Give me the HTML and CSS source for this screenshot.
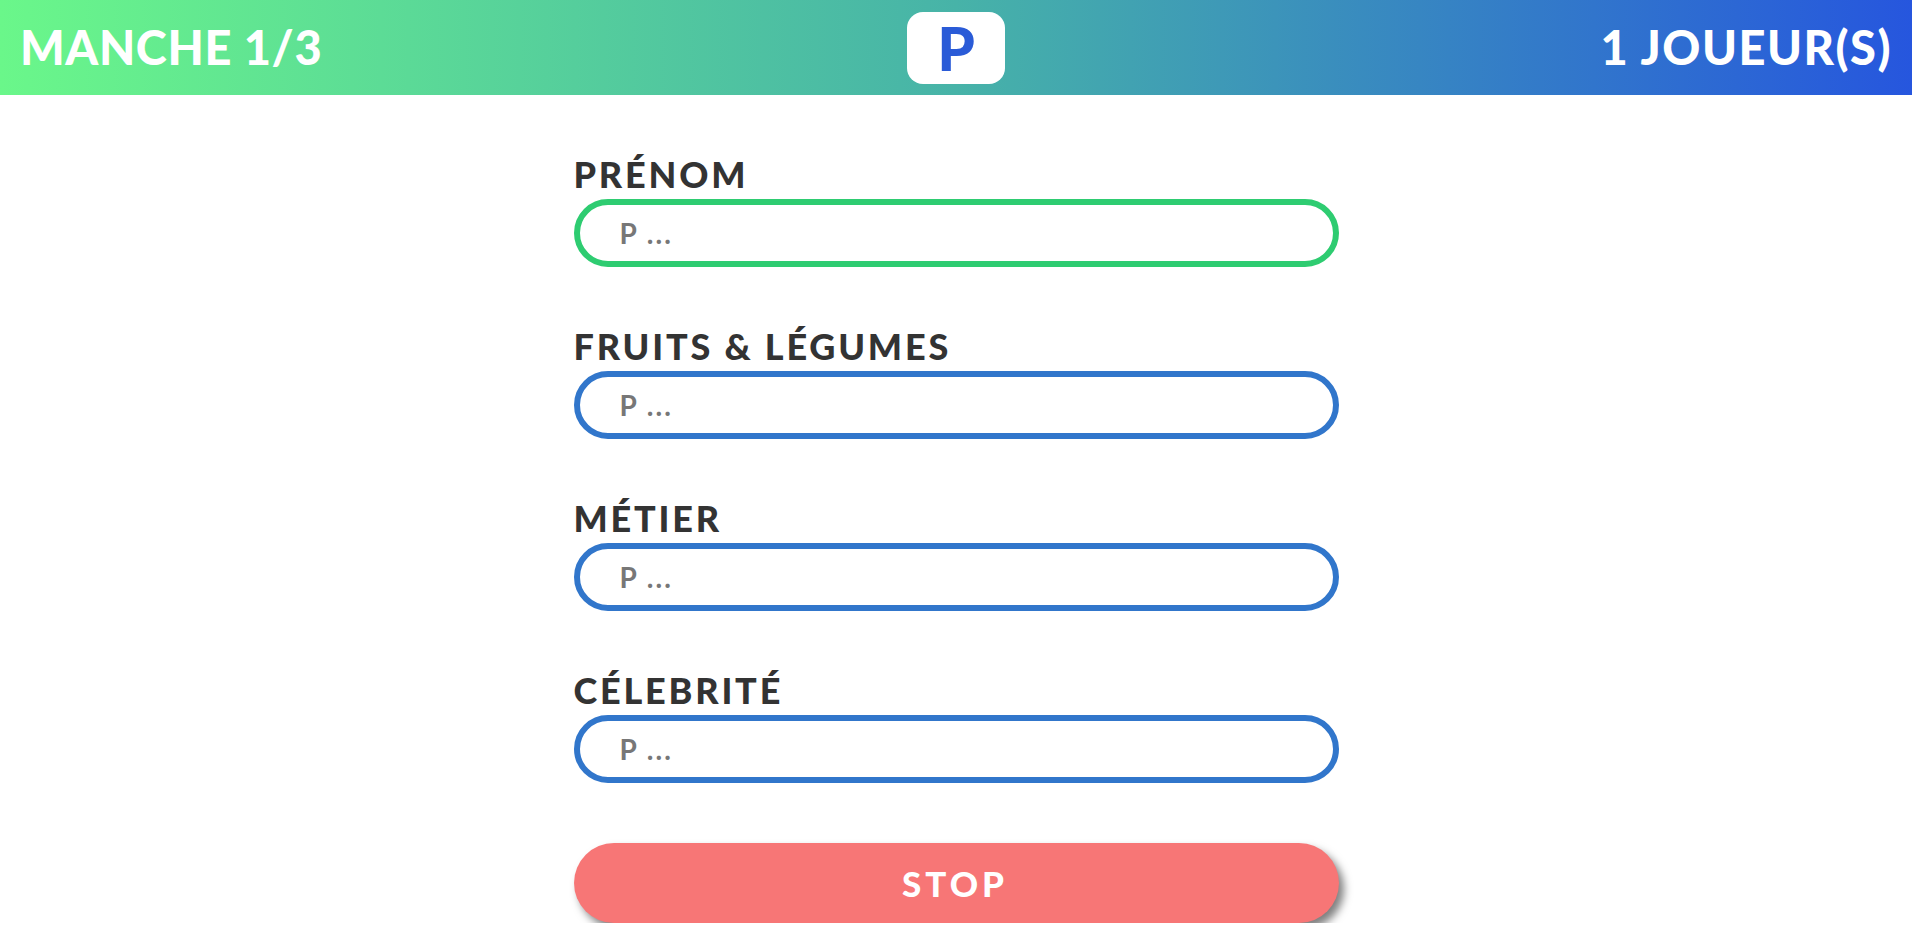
FILE: index.html
```html
<!DOCTYPE html>
<html lang="fr">
<head>
<meta charset="utf-8">
<title>Petit Bac</title>
<link rel="stylesheet" href="styles.css">
</head>
<body>
<header class="topbar">
  <div class="round">MANCHE 1/3</div>
  <div class="letter">P</div>
  <div class="players">1 JOUEUR(S)</div>
</header>
<main class="board">
  <form class="fields">
    <div class="field">
      <label class="field-label" for="f1">PRÉNOM</label>
      <input class="field-input active" id="f1" type="text" placeholder="P ..." autofocus>
    </div>
    <div class="field">
      <label class="field-label" for="f2">FRUITS &amp; LÉGUMES</label>
      <input class="field-input" id="f2" type="text" placeholder="P ...">
    </div>
    <div class="field">
      <label class="field-label" for="f3">MÉTIER</label>
      <input class="field-input" id="f3" type="text" placeholder="P ...">
    </div>
    <div class="field">
      <label class="field-label" for="f4">CÉLEBRITÉ</label>
      <input class="field-input" id="f4" type="text" placeholder="P ...">
    </div>
    <button class="stop" type="button">STOP</button>
  </form>
</main>
</body>
</html>
```
FILE: styles.css
```css
* { box-sizing: border-box; }
html, body { margin: 0; padding: 0; background: #fff; }
body { font-family: "Lato", "Open Sans", sans-serif; font-weight: 700; }

.topbar {
  height: 95px;
  display: grid;
  grid-template-columns: 1fr auto 1fr;
  align-items: center;
  padding: 0 20px 0 20px;
  background: linear-gradient(to right, #6af78a 0%, #47b3a8 50%, #2656de 100%);
  color: #fff;
}
.round, .players {
  font-size: 47px;
  line-height: 1;
  font-weight: 900;
  letter-spacing: 0.6px;
}
.players { justify-self: end; letter-spacing: 1.5px; }
.letter {
  width: 98px;
  height: 72px;
  background: #fff;
  border-radius: 16px;
  display: flex;
  align-items: center;
  justify-content: center;
  color: #2a5bd7;
  font-size: 60px;
  font-weight: 900;
  line-height: 1;
}

.board {
  width: 765px;
  margin: 0 auto;
  padding-top: 59px;
}
.fields {
  display: flex;
  flex-direction: column;
  gap: 59px;
}
.field {
  display: flex;
  flex-direction: column;
  gap: 5px;
}
.field-label {
  font-size: 36px;
  line-height: 40px;
  color: #333;
  font-weight: 900;
  letter-spacing: 2.8px;
}
.field-input {
  height: 68px;
  width: 100%;
  border: 6px solid #3176cb;
  border-radius: 34px;
  padding: 0 0 0 40px;
  font-family: inherit;
  font-weight: 700;
  font-size: 28px;
  letter-spacing: 2px;
  color: #333;
  outline: none;
  background: #fff;
}
.field-input.active { border-color: #2ecc71; }
.field-input::placeholder { color: #777; opacity: 1; }

.stop {
  margin-top: 1px;
  height: 80px;
  width: 100%;
  border: none;
  border-radius: 40px;
  background: #f77676;
  color: #fff;
  font-family: inherit;
  font-weight: 900;
  font-size: 35px;
  letter-spacing: 4px;
  padding-left: 4px;
  box-shadow: 5px 6px 9px rgba(0, 0, 0, 0.5);
  cursor: pointer;
}
```
